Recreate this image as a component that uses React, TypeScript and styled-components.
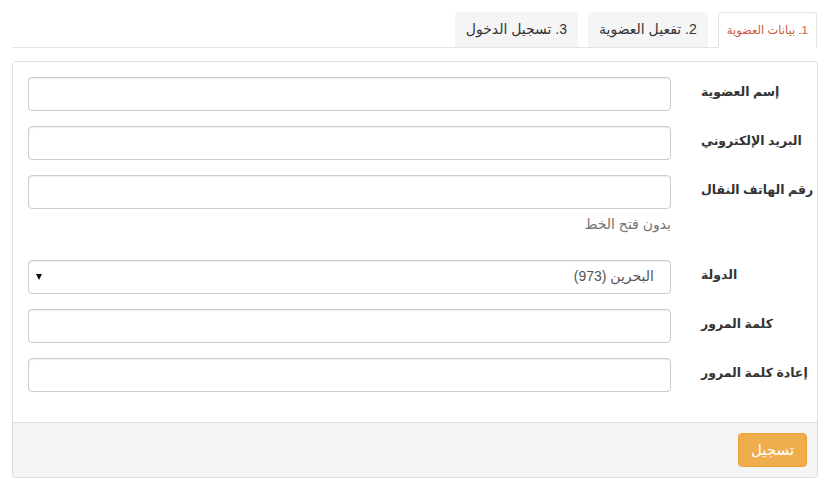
import React, {useState} from "react";
import styled, {createGlobalStyle} from "styled-components";

const GlobalStyle = createGlobalStyle`
  * {
    box-sizing: border-box;
  }
  body {
    margin: 0;
    background: #fff;
    color: #333;
    font-family: "Liberation Sans", "DejaVu Sans", sans-serif;
    font-size: 14px;
    line-height: 1.42857;
  }
`

const Page = styled.div`
  direction: rtl;
  padding: 12px 12px 0;
`

const Tabs = styled.ul`
  display: flex;
  gap: 10px;
  list-style: none;
  margin: 0;
  padding: 0 1px 0 0;
  border-bottom: 1px solid #e4e4e4;
  height: 36px;
`

const Tab = styled.li<{ $active?: boolean }>`
  display: flex;
  align-items: center;
  white-space: nowrap;
  height: ${p => p.$active ? '36px' : '35px'};
  padding: 0 ${p => p.$active ? '8px' : '10px'};
  border: 1px solid ${p => p.$active ? '#e4e4e4' : '#f5f5f5'};
  border-bottom-color: ${p => p.$active ? '#fff' : '#f5f5f5'};
  border-radius: 3px 3px 0 0;
  background: ${p => p.$active ? '#fff' : '#f5f5f5'};
  color: ${p => p.$active ? '#c9573f' : '#333'};
  font-size: ${p => p.$active ? '11.5px' : '14px'};
  cursor: pointer;
`

const Panel = styled.div`
  margin-top: 13px;
  border: 1px solid #ddd;
  border-radius: 4px;
  box-shadow: 0 1px 1px rgba(0, 0, 0, .05);
  background: #fff;
`

const PanelBody = styled.div`
  padding: 15px;
`

const Group = styled.div`
  display: grid;
  grid-template-columns: 101px 643px;
  column-gap: 30px;
  margin-bottom: 15px;
`

const Label = styled.label`
  padding-top: 7px;
  direction: ltr;
  text-align: left;
  white-space: nowrap;
  font-weight: 700;
  font-size: 12.5px;
  color: #333;
`

const Field = styled.div`
  position: relative;
`

const Input = styled.input`
  display: block;
  width: 100%;
  height: 34px;
  padding: 6px 12px;
  font: inherit;
  color: #555;
  background: #fff;
  border: 1px solid #ccc;
  border-radius: 4px;
  box-shadow: inset 0 1px 1px rgba(0, 0, 0, .075);
  outline: none;
`

const Select = styled.select`
  display: block;
  width: 100%;
  height: 34px;
  padding: 6px 16px 6px 24px;
  font: inherit;
  font-size: 14px;
  color: #555;
  background: #fff;
  border: 1px solid #ccc;
  border-radius: 4px;
  box-shadow: inset 0 1px 1px rgba(0, 0, 0, .075);
  appearance: none;
  outline: none;
`

const Caret = styled.span`
  position: absolute;
  left: 8px;
  top: 14px;
  width: 0;
  height: 0;
  border-left: 3px solid transparent;
  border-right: 3px solid transparent;
  border-top: 6px solid #111;
  pointer-events: none;
`

const Help = styled.span`
  display: block;
  margin: 6px 0 10px;
  color: #737373;
  font-size: 14px;
`

const PanelFooter = styled.div`
  display: flex;
  padding: 10px;
  background: #f4f4f4;
  border-top: 1px solid #ddd;
  border-radius: 0 0 3px 3px;
`

const Button = styled.button`
  height: 34px;
  width: 69px;
  font: inherit;
  font-size: 15px;
  color: #fff;
  background: #f0ad4e;
  border: 1px solid #eea236;
  border-radius: 4px;
  cursor: pointer;
`

const tabs = ['1. بيانات العضوية', '2. تفعيل العضوية', '3. تسجيل الدخول']

const App = () => {
  const [active, setActive] = useState(0)
  return (
    <>
      <GlobalStyle/>
      <Page>
        <Tabs>
          {
            tabs.map((t, i) => (
              <Tab key={t} $active={i === active} onClick={() => setActive(i)}>{t}</Tab>
            ))
          }
        </Tabs>
        <Panel>
          <PanelBody>
            <Group>
              <Label>إسم العضوية</Label>
              <Field><Input type="text"/></Field>
            </Group>
            <Group>
              <Label>البريد الإلكتروني</Label>
              <Field><Input type="email"/></Field>
            </Group>
            <Group>
              <Label>رقم الهاتف النقال</Label>
              <Field>
                <Input type="text"/>
                <Help>بدون فتح الخط</Help>
              </Field>
            </Group>
            <Group>
              <Label>الدولة</Label>
              <Field>
                <Select defaultValue="973">
                  <option value="973">البحرين (973)</option>
                </Select>
                <Caret/>
              </Field>
            </Group>
            <Group>
              <Label>كلمة المرور</Label>
              <Field><Input type="password"/></Field>
            </Group>
            <Group>
              <Label>إعادة كلمة المرور</Label>
              <Field><Input type="password"/></Field>
            </Group>
          </PanelBody>
          <PanelFooter>
            <Button>تسجيل</Button>
          </PanelFooter>
        </Panel>
      </Page>
    </>
  )
}

export default App
